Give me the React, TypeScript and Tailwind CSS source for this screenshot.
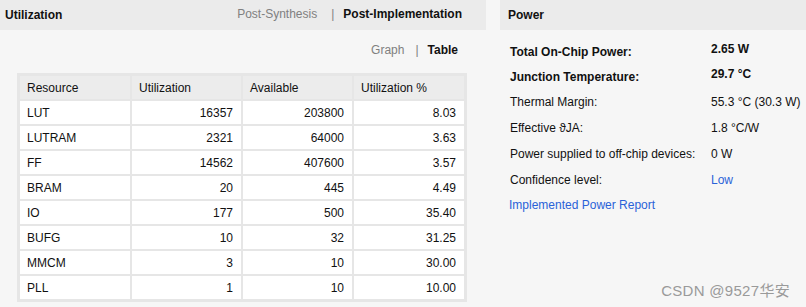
import React from "react";

type Row = { name: string; used: number; avail: number; pct: string };

const rows: Row[] = [
  { name: "LUT", used: 16357, avail: 203800, pct: "8.03" },
  { name: "LUTRAM", used: 2321, avail: 64000, pct: "3.63" },
  { name: "FF", used: 14562, avail: 407600, pct: "3.57" },
  { name: "BRAM", used: 20, avail: 445, pct: "4.49" },
  { name: "IO", used: 177, avail: 500, pct: "35.40" },
  { name: "BUFG", used: 10, avail: 32, pct: "31.25" },
  { name: "MMCM", used: 3, avail: 10, pct: "30.00" },
  { name: "PLL", used: 1, avail: 10, pct: "10.00" },
];

const power = [
  { label: "Total On-Chip Power:", value: "2.65 W", bold: true, h: "h-[25px]" },
  { label: "Junction Temperature:", value: "29.7 °C", bold: true, h: "h-[25px]" },
  { label: "Thermal Margin:", value: "55.3 °C (30.3 W)", bold: false, h: "h-[26px]" },
  { label: "Effective ϑJA:", value: "1.8 °C/W", bold: false, h: "h-[26px]" },
  { label: "Power supplied to off-chip devices:", value: "0 W", bold: false, h: "h-[26px]" },
];

export default function App() {
  return (
    <div
      className="flex h-[307px] w-[806px] overflow-hidden bg-[#f6f6f6] text-[12px] text-[#111]"
      style={{ fontFamily: '"Liberation Sans", Arial, "Noto Sans CJK SC", sans-serif' }}
    >
      {/* Utilization */}
      <section className="flex w-[486px] shrink-0 flex-col">
        <header className="flex h-[30px] items-center justify-between bg-[#ebebeb] pl-[5px] pr-[24px]">
          <span className="font-bold">Utilization</span>
          <div className="flex items-center pb-[3px]">
            <span className="text-[#808080]">Post-Synthesis</span>
            <span className="ml-[14px] mr-[9px] text-[#808080]">|</span>
            <span className="font-bold">Post-Implementation</span>
          </div>
        </header>

        <div className="flex h-[28px] items-center justify-end pr-[28px] pt-[12px]">
          <span className="text-[#808080]">Graph</span>
          <span className="ml-[11px] mr-[9px] text-[#808080]">|</span>
          <span className="font-bold">Table</span>
        </div>

        <div className="ml-[17px] mt-[15px] w-[450px] bg-[#e6e6e6] p-[3px]">
          <div className="grid grid-cols-[110px_109px_109px_110px] gap-[2px] bg-[#e6e6e6]">
            {["Resource", "Utilization", "Available", "Utilization %"].map((h) => (
              <div key={h} className="flex h-[23px] items-center bg-[#ececec] px-[7px]">
                {h}
              </div>
            ))}
            {rows.map((r) => (
              <React.Fragment key={r.name}>
                <div className="flex h-[23px] items-center bg-white px-[7px]">{r.name}</div>
                <div className="flex h-[23px] items-center justify-end bg-white px-[8px]">{r.used}</div>
                <div className="flex h-[23px] items-center justify-end bg-white px-[8px]">{r.avail}</div>
                <div className="flex h-[23px] items-center justify-end bg-white px-[8px]">{r.pct}</div>
              </React.Fragment>
            ))}
          </div>
        </div>
      </section>

      <div className="w-[14px] shrink-0" />

      {/* Power */}
      <section className="relative flex flex-1 flex-col">
        <header className="flex h-[30px] items-center bg-[#ebebeb] pl-[8px]">
          <span className="font-bold">Power</span>
        </header>

        <div className="pl-[10px] pt-[9px]">
          {power.map((p) => (
            <div key={p.label} className={`grid grid-cols-[201px_1fr] items-center ${p.h}`}>
              <span className={p.bold ? "font-bold" : ""}>{p.label}</span>
              <span className={p.bold ? "-mt-[6px] font-bold" : ""}>{p.value}</span>
            </div>
          ))}
          <div className="grid h-[26px] grid-cols-[201px_1fr] items-center">
            <span>Confidence level:</span>
            <span className="text-[#2a62d8]">Low</span>
          </div>
          <div className="flex h-[24px] items-center">
            <span className="-ml-[1px] text-[#2a62d8]">Implemented Power Report</span>
          </div>
        </div>

        <div className="absolute bottom-[5px] right-[16px] text-[15px] tracking-[0.3px] text-[#9a9a9a]">
          CSDN @9527华安
        </div>
      </section>
    </div>
  );
}
